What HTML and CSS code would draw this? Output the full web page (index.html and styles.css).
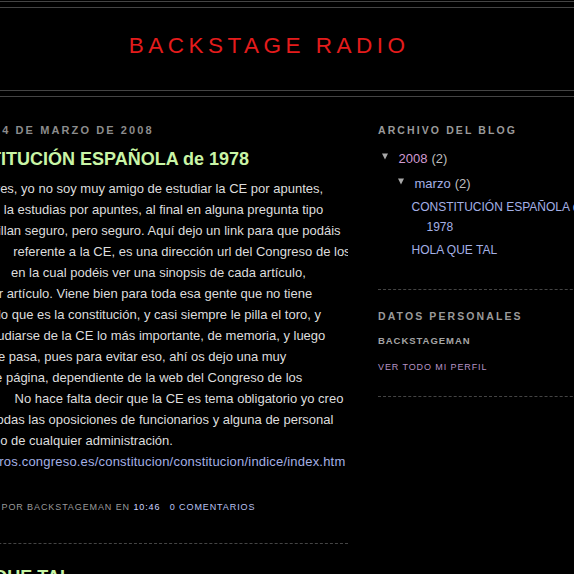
FILE: index.html
```html
<!DOCTYPE html>
<html lang="es">
<head>
<meta charset="utf-8">
<title>Backstage Radio</title>
<link rel="stylesheet" href="styles.css">
</head>
<body>
<div class="outer">
  <div class="header-wrapper">
    <div class="header">
      <h1 class="blog-title">Backstage Radio</h1>
    </div>
  </div>
  <div class="content">
    <div class="main">
      <h2 class="date-header">martes 4 de marzo de 2008</h2>
      <div class="post">
        <h3 class="post-title">CONSTITUCIÓN ESPAÑOLA de 1978</h3>
        <div class="post-body">Hola lectores, yo no soy muy amigo de estudiar la CE por apuntes,<br>y es que si la estudias por apuntes, al final en alguna pregunta tipo<br>test te la pillan seguro, pero seguro. Aquí dejo un link para que podáis<br>ver todo lo&nbsp;&nbsp;&nbsp; referente a la CE, es una dirección url del Congreso de los<br>Diputados,&nbsp;&nbsp; en la cual podéis ver una sinopsis de cada artículo,<br>artículo por artículo. Viene bien para toda esa gente que no tiene<br>muy claro lo que es la constitución, y casi siempre le pilla el toro, y<br>le toca estudiarse de la CE lo más importante, de memoria, y luego<br>pasa lo que pasa, pues para evitar eso, ahí os dejo una muy<br>interesante página, dependiente de la web del Congreso de los<br>Diputados.&nbsp;&nbsp;&nbsp; No hace falta decir que la CE es tema obligatorio yo creo<br>que para todas las oposiciones de funcionarios y alguna de personal<br>laboral y fijo de cualquier administración.<br>- <a class="post-link" href="#">http://narros.congreso.es/constitucion/constitucion/indice/index.htm</a></div>
        <div class="post-footer"><span>Publicado por backstageman</span> <span>en <a class="ts" href="#">10:46</a></span> <a class="comments" href="#">0 comentarios</a></div>
      </div>
      <div class="post">
        <h3 class="post-title">HOLA QUE TAL</h3>
      </div>
    </div>
    <div class="sidebar">
      <div class="widget">
        <h2 class="widget-title">Archivo del blog</h2>
        <ul class="archive">
          <li class="year">
            <div class="row">
              <svg class="zippy" viewBox="0 0 7 7" width="7" height="7"><polygon points="0,0 7,0 3.5,7"/></svg>
              <a class="visited" href="#">2008</a><span class="count">(2)</span>
            </div>
            <ul class="months">
              <li class="month">
                <div class="row">
                  <svg class="zippy" viewBox="0 0 7 7" width="7" height="7"><polygon points="0,0 7,0 3.5,7"/></svg>
                  <a href="#">marzo</a><span class="count">(2)</span>
                </div>
                <ul class="posts">
                  <li><a href="#">CONSTITUCIÓN ESPAÑOLA de 1978</a></li>
                  <li><a href="#">HOLA QUE TAL</a></li>
                </ul>
              </li>
            </ul>
          </li>
        </ul>
      </div>
      <div class="widget profile">
        <h2 class="widget-title">Datos personales</h2>
        <div class="profile-name">backstageman</div>
        <a class="profile-link" href="#">Ver todo mi perfil</a>
      </div>
    </div>
  </div>
</div>
</body>
</html>
```

FILE: styles.css
```css
html, body {
  margin: 0;
  padding: 0;
  background: #000;
}
body {
  width: 574px;
  height: 574px;
  overflow: hidden;
  color: #ddd;
  font-family: "Liberation Sans", Arial, sans-serif;
  font-size: 13px;
}
a {
  text-decoration: none;
  color: #a4b0e6;
}
ul {
  list-style: none;
  margin: 0;
  padding: 0;
}

.outer {
  width: 660px;
  margin-left: -62px;
  padding-top: 1px;
}

/* header */
.header-wrapper {
  border: 1px solid #444;
}
.header {
  margin: 5px;
  border: 1px solid #444;
  height: 82px;
  text-align: center;
}
.blog-title {
  margin: 0;
  padding-top: 25px;
  font-size: 22.5px;
  line-height: 25px;
  font-weight: normal;
  letter-spacing: 0.2em;
  text-indent: 0.1em;
  text-transform: uppercase;
  color: #e41c1c;
}

/* columns */
.content {
  display: flex;
  justify-content: space-between;
}
.main {
  width: 410px;
  overflow: hidden;
}
.sidebar {
  width: 220px;
}

/* headings */
.date-header,
.widget-title {
  margin: 26px 0 0;
  font-size: 10.5px;
  line-height: 14px;
  font-weight: bold;
  letter-spacing: 0.2em;
  text-transform: uppercase;
  color: #8c8c8c;
}
.widget-title {
  color: #9a9a9a;
}

/* post */
.date-header {
  margin-bottom: 9px;
  font-size: 11px;
  letter-spacing: 2.1px;
}
.post {
  padding-bottom: 29px;
  border-bottom: 1px dashed #444;
}
.post + .post {
  margin-top: 20px;
}
.post-title {
  margin: 0;
  font-size: 18px;
  line-height: 26px;
  font-weight: bold;
  color: #c9f5a6;
}
.post-body {
  margin-top: 6px;
  line-height: 21px;
  white-space: nowrap;
}
.post-link {
  letter-spacing: 0.2px;
}
.post-footer {
  margin-top: 29px;
  font-size: 9px;
  line-height: 13px;
  letter-spacing: 0.1em;
  text-transform: uppercase;
  color: #9a9a9a;
}
.post-footer .ts {
  color: #ccd4ff;
}
.post-footer .comments {
  margin-left: 6px;
  color: #b9c2f2;
}

/* sidebar */
.widget {
  padding-bottom: 29px;
  border-bottom: 1px dashed #444;
}
.archive {
  margin-top: 11.5px;
  line-height: 20px;
}
.row {
  display: flex;
  align-items: flex-start;
}
.zippy {
  width: 6px;
  height: 7px;
  margin-top: 4.5px;
  margin-right: 10.5px;
  fill: #a8a8a8;
  flex: none;
}
.count {
  margin-left: 4px;
  color: #bdbdbd;
}
.archive .visited {
  color: #d29bd2;
}
.year {
  padding-left: 4px;
}
.months {
  margin-top: 5px;
}
.month .row {
  padding-left: 16px;
}
.posts {
  margin-top: 3px;
}
.posts li {
  padding-left: 44.5px;
  text-indent: -15px;
  font-size: 12px;
  line-height: 20px;
}
.posts li + li {
  margin-top: 3.5px;
}

.profile {
  padding-bottom: 22px;
}
.profile .widget-title {
  margin-top: 19px;
}
.profile-name {
  margin-top: 11px;
  font-size: 9.5px;
  line-height: 13px;
  font-weight: bold;
  letter-spacing: 0.1em;
  text-transform: uppercase;
  color: #a5a5a5;
}
.profile-link {
  display: block;
  margin-top: 14.4px;
  font-size: 9px;
  line-height: 13px;
  letter-spacing: 0.1em;
  text-transform: uppercase;
  color: #b693c4;
}
```
